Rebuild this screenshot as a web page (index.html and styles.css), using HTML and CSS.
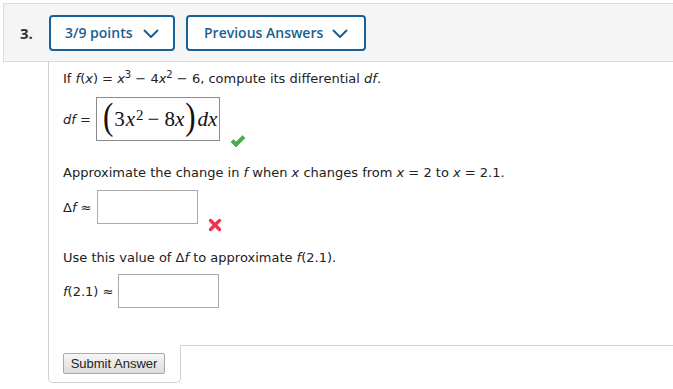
FILE: index.html
```html
<!DOCTYPE html>
<html lang="en">
<head>
    <meta charset="UTF-8">
    <title>Question 3</title>
    <link rel="stylesheet" href="styles.css">
</head>
<body>

    <div class="question">
        <!-- Header with number and dropdowns -->
        <div class="q-header">
            <span class="q-number">3.</span>
            <button class="q-toggle q-points">3/9 points
                <svg class="chevron" viewBox="0 0 16 9" width="16" height="9"><path d="M1 1 L8 8 L15 1" fill="none" stroke="currentColor" stroke-width="2"/></svg>
            </button>
            <button class="q-toggle q-previous">Previous Answers
                <svg class="chevron" viewBox="0 0 16 9" width="16" height="9"><path d="M1 1 L8 8 L15 1" fill="none" stroke="currentColor" stroke-width="2"/></svg>
            </button>
        </div>

        <!-- Question body -->
        <div class="q-body">
            <p class="q-text">If <i>f</i>(<i>x</i>) = <i>x</i><sup>3</sup> &minus; 4<i>x</i><sup>2</sup> &minus; 6, compute its differential <i>df</i>.</p>

            <div class="answer-row row-df">
                <span class="answer-label"><i>df</i> =</span>
                <div class="math-box">
                    <span class="paren">(</span>3<i>x</i><sup>2</sup><span class="op">&minus;</span>8<i>x</i><span class="paren">)</span><i>dx</i>
                </div>
                <svg class="mark mark-check" viewBox="0 0 16 13" width="16" height="13">
                    <path d="M1 7 L3.5 4.5 L6 7 L12.5 0.5 L15 3 L6 12 Z" fill="#45b04c" stroke="#2f9a3a" stroke-width="0.6"/>
                </svg>
            </div>

            <p class="q-text">Approximate the change in <i>f</i> when <i>x</i> changes from <i>x</i> = 2 to <i>x</i> = 2.1.</p>

            <div class="answer-row row-delta">
                <span class="answer-label">&Delta;<i>f</i> &asymp;</span>
                <div class="input-box"></div>
                <svg class="mark mark-cross" viewBox="0 0 14 14" width="14" height="14">
                    <path d="M2.5 2.5 L11.5 11.5 M11.5 2.5 L2.5 11.5" stroke="#f0324f" stroke-width="3.4" stroke-linecap="round"/>
                </svg>
            </div>

            <p class="q-text">Use this value of &Delta;<i>f</i> to approximate <i>f</i>(2.1).</p>

            <div class="answer-row row-approx">
                <span class="answer-label"><i>f</i>(2.1) &asymp;</span>
                <div class="input-box"></div>
            </div>
        </div>

        <!-- Submit tab -->
        <div class="q-footer">
            <div class="submit-box">
                <button class="submit-btn">Submit Answer</button>
            </div>
            <div class="footer-rest"></div>
        </div>
    </div>

</body>
</html>
```

FILE: styles.css
```css
body {
    margin: 0;
    background-color: #ffffff;
    font-family: "DejaVu Sans", Verdana, sans-serif;
    color: #222;
}
.question {
    margin: 3px 0 0 3px;
}
.q-header {
    display: flex;
    align-items: center;
    height: 57px;
    padding-left: 16px;
    background-color: #f5f5f5;
    border-top: 1px solid #dcdcdc;
    border-bottom: 1px solid #dcdcdc;
    border-left: 1px solid #dcdcdc;
}
.q-number {
    font-family: "Open Sans", sans-serif;
    font-weight: 700;
    font-size: 15px;
    color: #333;
    width: 29px;
}
.q-toggle {
    display: flex;
    align-items: center;
    justify-content: space-between;
    height: 36px;
    margin-right: 11px;
    padding: 0 14px 0 14px;
    background-color: #fff;
    border: 2px solid #15639a;
    border-radius: 4px;
    font-family: "Open Sans", sans-serif;
    font-weight: 600;
    font-size: 14px;
    color: #1a5f91;
}
.q-points {
    width: 126px;
}
.q-previous {
    width: 180px;
    padding-left: 16px;
    padding-right: 16px;
}
.chevron {
    margin-top: 1px;
}
.q-body {
    margin-left: 45px;
    padding: 9px 14px 37px 14px;
    border-left: 1px solid #d2d2d2;
}
.q-text {
    margin: 0;
    font-size: 13px;
    line-height: 16px;
}
.q-text sup {
    font-size: 10px;
    line-height: 0;
}
.answer-row {
    display: flex;
    align-items: center;
}
.row-df {
    margin: 10px 0 24px 0;
}
.row-delta {
    margin: 9px 0 26px 0;
}
.row-approx {
    margin: 8px 0 0 0;
}
.answer-label {
    font-size: 13px;
    margin-right: 5px;
}
.math-box {
    display: flex;
    align-items: center;
    box-sizing: border-box;
    width: 124px;
    height: 44px;
    padding: 0 0 0 6px;
    border: 1px solid #8c8c8c;
    font-family: "Liberation Serif", "Times New Roman", serif;
    font-size: 21px;
    color: #111;
}
.math-box i {
    font-style: italic;
    margin-right: 1px;
}
.math-box sup {
    font-size: 15px;
    line-height: 0;
    position: relative;
    top: -4px;
}
.op {
    margin: 0 5px 0 4px;
}
.paren {
    display: inline-block;
    font-size: 31px;
    transform: scaleY(1.2);
    margin: -4px 1px 0 0;
}
.paren + i {
    margin-left: 1px;
}
.input-box {
    width: 99px;
    height: 32px;
    border: 1px solid #a9a9a9;
    background-color: #fff;
}
.mark {
    align-self: flex-end;
    margin-left: 10px;
    margin-bottom: -7px;
}
.mark-cross {
    margin-bottom: -8px;
}
.q-footer {
    display: flex;
}
.submit-box {
    width: 117px;
    height: 29px;
    padding: 8px 0 0 14px;
    margin-left: 45px;
    border: 1px solid #d2d2d2;
    border-top: none;
    border-radius: 0 0 5px 5px;
    box-sizing: content-box;
}
.footer-rest {
    flex: 1;
    border-top: 1px solid #d2d2d2;
    margin-left: -1px;
}
.submit-btn {
    display: block;
    width: 102px;
    height: 21px;
    padding: 0;
    background: linear-gradient(#f6f6f6, #dddddd);
    border: 1px solid #a8a8a8;
    border-radius: 2px;
    font-family: "Liberation Sans", Arial, sans-serif;
    font-size: 13px;
    color: #222;
}
```
